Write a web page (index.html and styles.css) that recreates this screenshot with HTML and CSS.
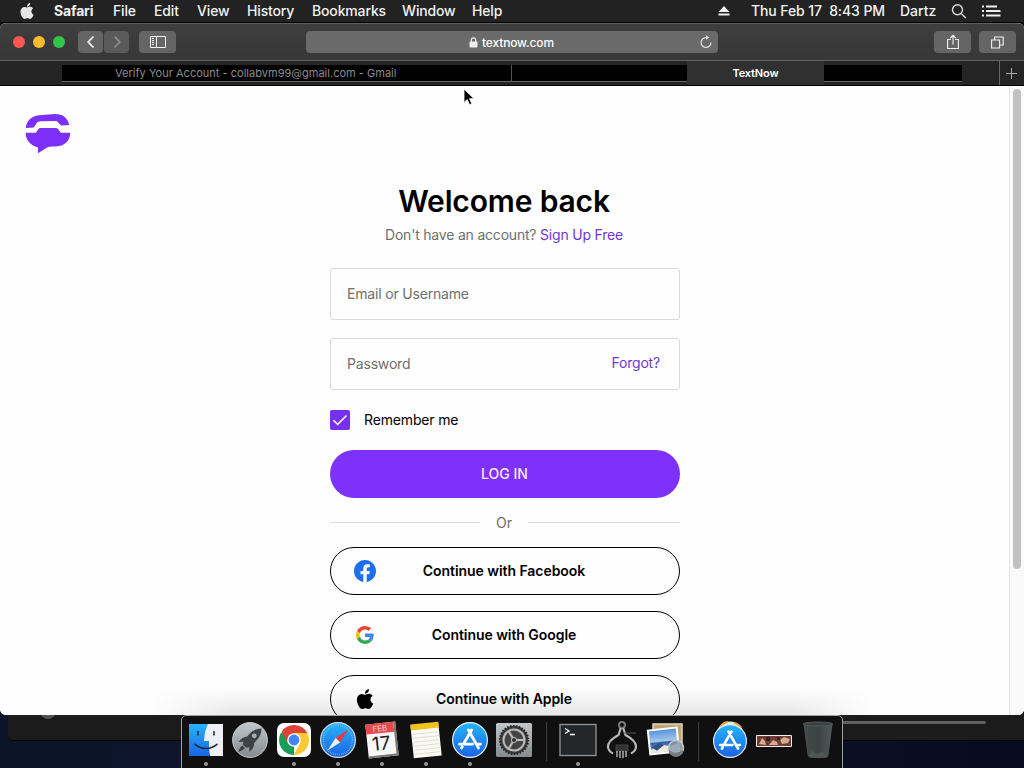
FILE: index.html
```html
<!DOCTYPE html>
<html lang="en">
<head>
<meta charset="utf-8">
<title>TextNow</title>
<link rel="stylesheet" href="styles.css">
</head>
<body>
<svg class="defs" width="0" height="0" aria-hidden="true">
  <defs>
    <symbol id="apple" viewBox="0 0 24 24"><path d="M12.152 6.896c-.948 0-2.415-1.078-3.96-1.04-2.04.027-3.91 1.183-4.961 3.014-2.117 3.675-.546 9.103 1.519 12.09 1.013 1.454 2.208 3.09 3.792 3.039 1.52-.065 2.09-.987 3.935-.987 1.831 0 2.35.987 3.96.948 1.637-.026 2.676-1.48 3.676-2.948 1.156-1.688 1.636-3.325 1.662-3.415-.039-.013-3.182-1.221-3.22-4.857-.026-3.04 2.48-4.494 2.597-4.559-1.429-2.09-3.623-2.324-4.39-2.376-2-.156-3.675 1.09-4.61 1.09zM15.53 3.83c.843-1.012 1.4-2.427 1.245-3.83-1.207.052-2.662.805-3.532 1.818-.78.896-1.454 2.338-1.273 3.714 1.338.104 2.715-.688 3.559-1.701"/></symbol>
    <linearGradient id="blue" x1="0" y1="0" x2="0" y2="1"><stop offset="0" stop-color="#24b5f8"/><stop offset="1" stop-color="#1c62e4"/></linearGradient>
    <linearGradient id="silver" x1="0" y1="0" x2="0" y2="1"><stop offset="0" stop-color="#c3c7c9"/><stop offset="1" stop-color="#858b8d"/></linearGradient>
    <linearGradient id="bin" x1="0" y1="0" x2="1" y2="0"><stop offset="0" stop-color="#454c4c"/><stop offset=".5" stop-color="#3c4343"/><stop offset="1" stop-color="#535959"/></linearGradient>
    <linearGradient id="sky" x1="0" y1="0" x2="0" y2="1"><stop offset="0" stop-color="#4f8fdc"/><stop offset=".5" stop-color="#a6c8ea"/><stop offset=".55" stop-color="#2e62a8"/><stop offset=".75" stop-color="#5a88b8"/><stop offset="1" stop-color="#dfd8c4"/></linearGradient>
    <symbol id="store" viewBox="0 0 36 36"><circle cx="18" cy="18" r="17.4" fill="url(#blue)" stroke="#e6f1fa" stroke-width="1.2"/><g stroke="#fff" stroke-width="2.8" stroke-linecap="round"><path d="M19.6 8 11.9 21.300M16.400 8 26.500 26M7.500 22.200H20.500M24.700 22.200H28.500M10.300 24.600 9.500 26"/></g></symbol>
  </defs>
</svg>
<header class="menubar">
  <svg class="mb-apple" width="14" height="16" viewBox="2 0 20 24" fill="#e6e6e6"><use href="#apple" width="24" height="24"/></svg>
  <nav class="menus"><b>Safari</b><span>File</span><span>Edit</span><span>View</span><span>History</span><span>Bookmarks</span><span>Window</span><span>Help</span></nav>
  <div class="status">
    <svg width="12" height="12" viewBox="0 0 12 12" fill="#eee"><path d="M6 1 11.500 7H.5zM.5 8.500h11v2H.5z"/></svg>
    <span class="clock">Thu Feb 17&nbsp; 8:43 PM</span><span class="user">Dartz</span>
    <svg class="search" width="16" height="16" viewBox="0 0 16 16" fill="none" stroke="#ddd" stroke-width="1.400"><circle cx="6.500" cy="6.700" r="5"/><path d="m10.200 10.400 4.600 4.600"/></svg>
    <svg width="19" height="12" viewBox="0 0 19 12" stroke="#eee" stroke-width="1.800"><path d="M0 1.500h2M4 1.500h11M0 6h2M4 6h14.500M0 10.500h2M4 10.500h14.500"/></svg>
  </div>
</header>

<div class="back-window"><i class="back-circle"></i><i class="back-scroll"></i></div>

<main class="window">
  <div class="toolbar">
    <div class="lights"><i class="red"></i><i class="yellow"></i><i class="green"></i></div>
    <div class="navs">
      <span class="tb"><svg width="10" height="14" viewBox="0 0 10 14" fill="none" stroke="#f2f2f2" stroke-width="1.800"><path d="M7.500 1.500 2.200 7l5.300 5.500"/></svg></span>
      <span class="tb dim"><svg width="10" height="14" viewBox="0 0 10 14" fill="none" stroke="#909090" stroke-width="1.600"><path d="M2.500 1.500 7.800 7l-5.300 5.500"/></svg></span>
    </div>
    <span class="tb wide"><svg width="16" height="12" viewBox="0 0 16 12" fill="none" stroke="#f4f4f4"><path d="M.5.500h15v11H.5zM6.500.500v11M2 2.500h2M2 4.500h2M2 6.500h2M2 8.500h2"/></svg></span>
    <div class="address">
      <svg width="9" height="11" viewBox="0 0 9 11"><rect x=".5" y="4.500" width="8" height="6" rx="1" fill="#eee"/><path d="M2.300 5V3a2.200 2.200 0 0 1 4.400 0v2" fill="none" stroke="#eee" stroke-width="1.200"/></svg>
      <span>textnow.com</span>
      <svg class="reload" width="14" height="14" viewBox="0 0 14 14" fill="none" stroke="#ddd" stroke-width="1.200"><path d="M8.500 2.600H7A4.900 4.900 0 1 0 11.900 7.500"/><path d="M7 .2v4.600l3.300-2.300z" fill="#ddd" stroke="none"/></svg>
    </div>
    <span class="tb wide share"><svg width="12" height="16" viewBox="0 0 12 16" fill="none" stroke="#f2f2f2" stroke-width="1.100"><path d="M3.800 5.500H.6v9h10.800v-9H8.200M6 10.500V1.500M3.300 4 6 1.300 8.700 4"/></svg></span>
    <span class="tb wide"><svg width="13" height="13" viewBox="0 0 13 13" fill="none" stroke="#f2f2f2" stroke-width="1.100"><path d="M.6 4h8v8h-8zM3.500 4V1h8.700v8H8.600"/></svg></span>
  </div>
  <div class="tabs">
    <div class="tab first"><span>Verify Your Account - collabvm99@gmail.com - Gmail</span></div>
    <div class="tab second"></div>
    <div class="tab active">TextNow</div>
    <div class="tab fourth"></div>
    <div class="plus"><svg width="11" height="11" viewBox="0 0 11 11" stroke="#aaa"><path d="M5.500 0v11M0 5.500h11"/></svg></div>
  </div>
  <div class="page">
    <div class="content">
      <svg class="logo" width="46" height="40" viewBox="0 0 46 40" fill="#7b2ff7"><path d="M.8 14C1.300 7 6.500 1.800 14 1.200L30 .1C38 .1 42.500 4 44.200 11.100L36 11.400 32.500 7.700C31.800 7 31 6.800 30 6.900L16 7.300C13.500 7.400 12.400 8 11.500 9.300L8.700 13.600z"/><path d="M.6 18.800H10.900L13.500 15Q14.200 14 15.500 14H31Q32.200 14 33 15L35.800 18.800H45.300C44.900 27.500 39 32.400 31 32.400H26.500Q23 32.500 20.500 34.500L13 39.300V33.400C6 31.800.6 26.500.6 18.800z"/></svg>
      <div class="form">
        <h1>Welcome back</h1>
        <p class="sub">Don't have an account? <a>Sign Up Free</a></p>
        <div class="field"><span>Email or Username</span></div>
        <div class="field"><span>Password</span><a>Forgot?</a></div>
        <div class="remember"><i><svg width="20" height="20" viewBox="0 0 20 20" fill="none" stroke="#fff" stroke-width="1.500"><path d="m3.400 10.300 4.300 4.100 8.800-8.900"/></svg></i><span>Remember me</span></div>
        <div class="login">LOG IN</div>
        <div class="or"><i></i><span>Or</span><i></i></div>
        <div class="social">
          <svg width="22" height="22" viewBox="0 0 24 24"><path fill="#1b6ff0" d="M24 12.073c0-6.627-5.373-12-12-12s-12 5.373-12 12c0 5.990 4.388 10.954 10.125 11.854v-8.385H7.078v-3.470h3.047V9.430c0-3.007 1.792-4.669 4.533-4.669 1.312 0 2.686.235 2.686.235v2.953H15.830c-1.491 0-1.956.925-1.956 1.874v2.250h3.328l-.532 3.470h-2.796v8.385C19.612 23.027 24 18.062 24 12.073z"/></svg>
          <span>Continue with Facebook</span>
        </div>
        <div class="social">
          <svg width="18" height="18" viewBox="0 0 48 48"><path fill="#EA4335" d="M24 9.500c3.540 0 6.710 1.220 9.210 3.600l6.850-6.850C35.900 2.380 30.470 0 24 0 14.620 0 6.510 5.380 2.560 13.220l7.980 6.190C12.430 13.720 17.740 9.500 24 9.500z"/><path fill="#4285F4" d="M46.980 24.550c0-1.570-.15-3.090-.38-4.550H24v9.020h12.940c-.58 2.960-2.260 5.480-4.780 7.180l7.730 6c4.510-4.180 7.090-10.360 7.090-17.650z"/><path fill="#FBBC05" d="M10.530 28.590c-.48-1.450-.76-2.990-.76-4.590s.27-3.140.76-4.590l-7.980-6.190C.92 16.460 0 20.120 0 24c0 3.880.92 7.540 2.560 10.780l7.970-6.190z"/><path fill="#34A853" d="M24 48c6.480 0 11.930-2.130 15.890-5.810l-7.730-6c-2.150 1.450-4.920 2.300-8.160 2.300-6.260 0-11.570-4.220-13.470-9.910l-7.980 6.190C6.510 42.620 14.620 48 24 48z"/></svg>
          <span>Continue with Google</span>
        </div>
        <div class="social">
          <svg width="22" height="20" viewBox="0 0 24 24"><use href="#apple" width="24" height="24"/></svg>
          <span>Continue with Apple</span>
        </div>
      </div>
    </div>
    <div class="scrollbar"><i></i></div>
  </div>
  <div class="dock-shadow"></div>
</main>

<footer class="dock">
  <div class="app run"><svg width="36" height="36" viewBox="0 0 36 36"><path fill="#eef0f5" d="M1 2h34v32H1z"/><path fill="url(#blue)" d="M1 2h19q-3.500 7-4 17h5q-.4 9 1.200 15H1z"/><path d="M10 9.500v3.500M26 9.500v3.500M7 22.300q11 8.500 22 0" fill="none" stroke="#14283e" stroke-width="1.500" stroke-linecap="round"/></svg></div>
  <div class="app"><svg width="36" height="36" viewBox="0 0 36 36"><circle cx="18" cy="18" r="17.400" fill="url(#silver)" stroke="#c7cbcc"/><path fill="#3c4246" d="M29.500 6.500q-7-.1-12.300 5.500l-2 2.500q-5 .3-8.700 5.500l5-.3q-.7 1.700-.5 3.200l3 2.700q1.600.2 3.100-.7l.3 5.200q5-4.200 4.800-9.200l2-2.200q5.600-5.600 5.300-12.200zM10.500 23.500q-3 1.800-4 6.500 4.300-1.200 6.500-4z"/><circle cx="22.300" cy="13.800" r="2.400" fill="#a9aeb0"/></svg></div>
  <div class="app run"><svg width="36" height="36" viewBox="0 0 36 36"><rect x="1" y="1" width="34" height="34" rx="7" fill="#fff"/><path fill="#199c57" d="M18 18 18 33A15 15 0 0 1 5.010 10.500z"/><path fill="#dc4437" d="M5.500 9.700 11.900 21 18 11h13.300A15 15 0 0 0 5.500 9.700z"/><path fill="#fcc934" d="M31.300 11H18l6 10.500L17.500 33A15 15 0 0 0 31.300 11z"/><circle cx="18" cy="18" r="6.800" fill="#fff"/><circle cx="18" cy="18" r="5.400" fill="#4285f4"/></svg></div>
  <div class="app run"><svg width="36" height="36" viewBox="0 0 36 36"><circle cx="18" cy="18" r="17.400" fill="url(#blue)" stroke="#d3dde2" stroke-width="1.200"/><circle cx="18" cy="18" r="14.500" fill="none" stroke="#8fcdf2" stroke-width="1.500" stroke-dasharray=".6 1.300"/><path fill="#f0f0f0" d="M7.300 28.700 15.800 15.800l4.400 4.400z"/><path fill="#e33b3f" d="M28.700 7.300 15.800 15.800l4.400 4.400z"/></svg></div>
  <div class="app run cal"><div class="cal-sheet"><small>FEB</small><span>17</span></div></div>
  <div class="app run"><svg width="36" height="38" viewBox="0 0 36 38"><g transform="rotate(-6 18 19)"><path fill="#fbfaf2" d="M4 3h28v33H4z"/><path fill="#f2c31c" d="M4 2h28v6H4z"/><path stroke="#dad9d2" stroke-width=".8" d="M5 12h26M5 16h26M5 20h26M5 24h26M5 28h26M5 32h26"/></g></svg></div>
  <div class="app run"><svg width="36" height="36"><use href="#store" width="36" height="36"/></svg></div>
  <div class="app"><svg width="38" height="36" viewBox="0 0 38 36"><rect x="1" y="1" width="36" height="34" rx="1.500" fill="url(#silver)"/><circle cx="19" cy="18" r="14.200" fill="#444"/><circle cx="19" cy="18" r="13.800" fill="none" stroke="#262626" stroke-width="2.600" stroke-dasharray="1.500 1.390"/><circle cx="19" cy="18" r="10.500" fill="none" stroke="#bbb" stroke-width="2"/><path d="M19 18 13.500 9M19 18h10M19 18l-5.500 9" stroke="#bbb" stroke-width="2.200"/><circle cx="19" cy="18" r="2.600" fill="#333" stroke="#bbb"/></svg></div>
  <i class="sep"></i>
  <div class="app run"><svg width="38" height="34" viewBox="0 0 38 34"><rect x="1" y="1.500" width="36" height="31" fill="#242628" stroke="#8b8f92" stroke-width="1.400"/><path d="m6 5.500 4 2.500-4 2.500M11 11.500h5" fill="none" stroke="#fff" stroke-width="1.300"/></svg></div>
  <div class="app"><svg width="36" height="38" viewBox="0 0 36 38" fill="none" stroke="#b7b7b7"><circle cx="18" cy="4" r="3" stroke="#777" stroke-width="2"/><path stroke-width="2.200" d="M16.800 7 14.500 14Q3.500 20 4 26q.3 4 5 6.500M19.200 7l2.300 7Q32.500 20 32 26q-.3 4-5 6.500"/><path stroke="#555" d="M20 12h12"/><path fill="#333" stroke="#444" d="M12 24h12v6H12z"/><path stroke-width="1.400" d="M13 30v6M16 30v7M19 30v7M22 30v6"/></svg></div>
  <div class="app"><svg width="40" height="38" viewBox="0 0 40 38"><path fill="#c0a477" stroke="#e3d7ba" stroke-width="1.500" d="M7 3h29v26H7z"/><g transform="rotate(-6 17 20)"><path fill="url(#sky)" stroke="#fff" stroke-width="2" d="M3 8h29v24H3z"/><path d="m4 28 10-5 9 3 8-2v7H4z" fill="#ece9df"/><path d="m5 25 8-3 5 2-8 5z" fill="#33518b"/></g><circle cx="30" cy="27" r="7.500" fill="#879aaa" fill-opacity=".8" stroke="#c3c6c8" stroke-width="1.500"/><path d="M23 29q7 6 14 0v3q-7 8-14 0z" fill="#777d80"/></svg></div>
  <i class="sep"></i>
  <div class="app"><svg width="36" height="40" viewBox="0 0 36 40"><circle cx="18" cy="15" r="13.500" fill="#f0ead8"/><path d="M8 7q4-5 8-5M22 3q5 1 7 5" stroke="#e7a241" stroke-width="2" fill="none"/><use href="#store" x="1" y="4" width="34" height="34"/></svg></div>
  <div class="app thumb"><svg width="36" height="12" viewBox="0 0 36 12"><path fill="#6d3d34" stroke="#eee" d="M.5.500h35v11H.5z"/><path fill="#d8ab91" d="m3 9 3-6 3 3 1 4zM13 10l4-5 4 2 1 3zM24 5l4-3 6 2-2 4-6 1z"/><path fill="#2d2522" d="M10 2h4v4h-4zM21 2h3v3h-3z"/></svg></div>
  <div class="app"><svg width="32" height="38" viewBox="0 0 32 38"><path fill="url(#bin)" d="M1.500 3 5.500 34q.4 3 4 3h13q3.600 0 4-3L30.500 3z"/><ellipse cx="16" cy="3" rx="14.800" ry="2" fill="#3a4040" stroke="#525a5a"/><path d="m7 34 3-4 5 3 5-2 5 3q-1 3-9 3t-9-3" fill="#505757"/></svg></div>
</footer>

<svg class="cursor" width="13" height="18" viewBox="0 0 13 18"><path d="M1 1v13.500l3.200-3 2.300 5.200 2.300-1-2.300-5H11z" fill="#000" stroke="#fff" stroke-width=".8"/></svg>
</body>
</html>
```

FILE: styles.css
```css
* { box-sizing: border-box; }
body {
  margin: 0;
  width: 1024px;
  height: 768px;
  overflow: hidden;
  position: relative;
  background: linear-gradient(90deg, #0b1428, #101631 30%, #080c20);
  font-family: Inter, "Liberation Sans", sans-serif;
  font-size: 14px;
  color: #000;
}
svg { display: block; flex: none; }
.defs { position: absolute; }

.menubar {
  height: 23px;
  background: #222;
  border-bottom: 1px solid #000;
  display: flex;
  align-items: center;
  color: #f2f2f2;
  font-weight: 500;
  line-height: 22px;
  white-space: nowrap;
}
.mb-apple { margin: -1px 20px 0 20px; }
.menus { display: grid; grid-template-columns: 59px 41px 43px 50px 65px 90px 70px 40px; letter-spacing: -.15px; }
.menus b { font-weight: 700; }
.status { margin-left: auto; display: flex; align-items: center; padding-right: 23px; }
.clock { margin-left: 21px; width: 149px; letter-spacing: -.1px; }
.user { width: 51px; }
.search { margin-right: 15px; }

.window {
  position: absolute;
  left: 0;
  top: 23px;
  width: 1024px;
  height: 692px;
  border-radius: 6px;
  overflow: hidden;
  display: flex;
  flex-direction: column;
  background: #fff;
}
.toolbar {
  height: 38px;
  flex: none;
  display: flex;
  align-items: center;
  padding: 0 8px 0 12px;
  background: linear-gradient(#3e3e3e, #373737);
  border-top: 1px solid #606060;
  border-bottom: 1px solid #656565;
}
.lights { display: flex; gap: 8px; margin: 0 13px 0 1px; }
.lights i { width: 12px; height: 12px; border-radius: 50%; }
.red { background: #fc5753; }
.yellow { background: #fdbc2e; }
.green { background: #33c748; }
.navs { display: flex; gap: 1px; margin-right: 10px; }
.tb {
  width: 25px;
  height: 22px;
  border-radius: 4px;
  background: #656565;
  display: flex;
  align-items: center;
  justify-content: center;
}
.tb.dim { background: #5a5a5a; }
.tb.wide { width: 37px; }
.address {
  width: 412px;
  height: 22px;
  margin-left: 130px;
  border-radius: 4px;
  background: #6a6a6a;
  color: #fff;
  font-size: 12px;
  font-weight: 500;
  letter-spacing: -.15px;
  display: flex;
  align-items: center;
  padding-left: 163px;
  gap: 4px;
}
.reload { margin: 0 5px 0 auto; }
.share { margin: 0 8px 0 auto; }

.tabs {
  height: 25px;
  flex: none;
  display: flex;
  align-items: center;
  background: #242424;
  border-bottom: 1px solid #000;
  padding-left: 62px;
  font-size: 11px;
  line-height: 16px;
}
.tab { height: 17px; margin-top: 1px; background: #000; border-bottom: 1px solid #666; }
.first { width: 449px; color: #8b8b8b; padding-left: 53px; letter-spacing: .02px; line-height: 17px; white-space: nowrap; }
.second { width: 176px; border-left: 1px solid #555; }
.tab.active { width: 137px; height: 24px; margin: 0; background: #303030; border: 0; color: #fff; font-weight: 600; letter-spacing: -.15px; line-height: 24px; text-align: center; }
.fourth { width: 138px; }
.plus { margin-left: auto; width: 25px; height: 24px; border-left: 1px solid #666; display: grid; place-items: center; padding-right: 1px; }

.page { flex: 1; min-height: 0; display: flex; background: #fefefe; }
.content { flex: 1; display: grid; grid-template-columns: 330px 350px; align-items: start; overflow: hidden; }
.logo { margin: 28px 0 0 25px; }
.form { padding-top: 95px; color: #6f6f6f; }
h1 { margin: 0 0 0 -2px; text-align: center; color: #000; font-size: 30px; line-height: 40px; font-weight: 600; letter-spacing: -.15px; white-space: nowrap; }
.sub { margin: 4px 0 23px -2px; line-height: 20px; text-align: center; letter-spacing: -.2px; }
.form a { color: #6f38cf; }
.field {
  height: 52px;
  margin-bottom: 18px;
  border: 1px solid #dadada;
  border-radius: 3px;
  display: flex;
  align-items: center;
  justify-content: space-between;
  padding: 0 19px 2px 16px;
  letter-spacing: -.18px;
}
.field a { margin-top: -2px; }
.remember { display: flex; align-items: center; gap: 14px; margin: 20px 0; height: 20px; color: #000; letter-spacing: -.15px; }
.remember span { padding-bottom: 2px; }
.remember i { width: 20px; height: 20px; border-radius: 2px; background: #7631ec; }
.login {
  height: 48px;
  border-radius: 24px;
  background: #7e31f8;
  color: #fce9ff;
  font-weight: 500;
  line-height: 48px;
  text-align: center;
  text-indent: -1px;
}
.or { display: flex; align-items: center; height: 49px; }
.or i { width: 150px; height: 1px; background: #dadada; }
.or i:last-child { width: 152px; }
.or span { flex: 1; text-align: center; padding-bottom: 1px; }
.social {
  height: 48px;
  margin-bottom: 16px;
  border: 1px solid #000;
  border-radius: 24px;
  color: #000;
  font-weight: 600;
  display: grid;
  grid-template-columns: 22px 1fr 24px;
  align-items: center;
  padding: 0 23px;
}
.social svg { justify-self: center; }
.social span { text-align: center; letter-spacing: -.06px; padding-bottom: 2px; }
.scrollbar { width: 15px; background: #fafafa; border-left: 1px solid #e6e6e6; padding: 3px 0 0 3px; }
.scrollbar i { display: block; width: 8px; height: 480px; border-radius: 4px; background: #c1c1c1; }
.dock-shadow {
  position: absolute;
  left: 150px;
  right: 150px;
  bottom: 0;
  height: 28px;
  background: linear-gradient(transparent, rgba(0, 0, 0, .09));
  -webkit-mask-image: linear-gradient(90deg, transparent, #000 80px, #000 calc(100% - 80px), transparent);
  mask-image: linear-gradient(90deg, transparent, #000 80px, #000 calc(100% - 80px), transparent);
}

.back-window {
  position: absolute;
  left: 8px;
  top: 690px;
  width: 1016px;
  height: 51px;
  border-radius: 0 0 0 5px;
  background: #1b1b1b;
  border-bottom: 1px solid #030303;
}
.back-circle { position: absolute; left: 32px; top: 12px; width: 16px; height: 17px; border-radius: 50%; background: #555; }
.back-scroll { position: absolute; right: 38px; top: 31px; width: 190px; height: 3px; border-radius: 2px; background: #606060; }

.dock {
  position: absolute;
  left: 181px;
  top: 715px;
  width: 662px;
  height: 60px;
  padding-left: 2px;
  border: 1px solid #a2a2a2;
  border-radius: 5px 5px 0 0;
  background: #101010;
  display: flex;
}
.app { width: 44px; height: 47px; display: grid; place-items: center; position: relative; }
.thumb { padding-top: 3px; }
.run::after { content: ""; position: absolute; left: 20px; top: 46px; width: 4px; height: 4px; border-radius: 50%; background: #999; }
.sep { width: 1px; height: 39px; margin: 6px 9px 0 10px; background: #3d3d3d; }
.cal-sheet {
  width: 30px;
  height: 34px;
  transform: rotate(-6deg);
  background: #f7f7f7;
  border-right: 2px solid #777;
  border-bottom: 2px solid #777;
  text-align: center;
  color: #222;
}
.cal-sheet small { display: block; height: 10px; background: #e4494c; color: #fbd5d5; font-size: 8px; line-height: 10px; }
.cal-sheet span { display: block; font-size: 19px; line-height: 22px; }
.cursor { position: absolute; left: 463px; top: 88px; }
```
